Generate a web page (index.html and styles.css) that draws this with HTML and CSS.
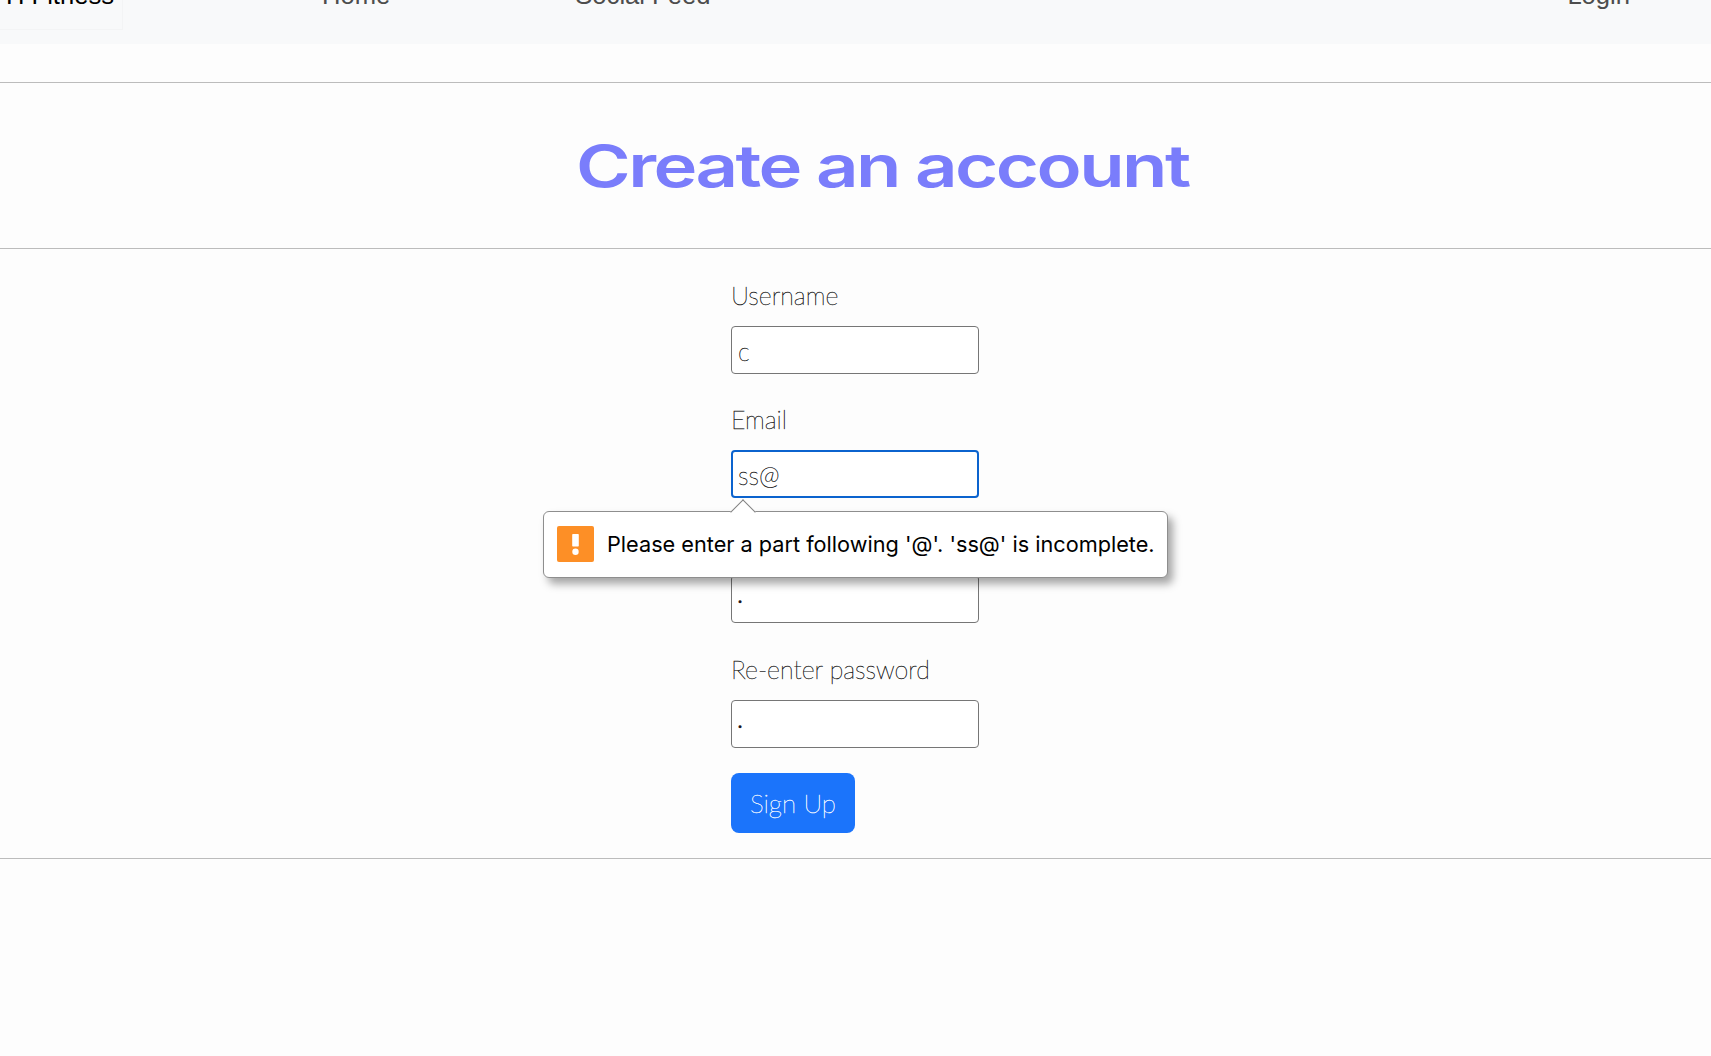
FILE: index.html
```html
<!DOCTYPE html>
<html lang="en">
<head>
  <meta charset="UTF-8" />
  <meta name="viewport" content="width=device-width, initial-scale=1.0"/>
  <title>Create an account</title>
  <link rel="stylesheet" href="styles.css">
</head>
<body>

  <nav class="navbar">
    <a class="brand" href="#">H Fitness</a>
    <a class="nav-link nav-home" href="#">Home</a>
    <a class="nav-link nav-feed" href="#">Social Feed</a>
    <a class="nav-link nav-login" href="#">Login</a>
  </nav>

  <hr class="rule rule-top">
  <h1 class="title"><span>Create an account</span></h1>
  <hr class="rule">

  <form class="signup">
    <div class="field field-first">
      <label for="username">Username</label>
      <input id="username" type="text" value="c">
    </div>
    <div class="field field-email">
      <label for="email">Email</label>
      <input id="email" class="is-focused" type="text" value="ss@">
      <div class="bubble">
        <span class="bubble-icon">
          <svg width="37" height="36" viewBox="0 0 37 36"><rect width="37" height="36" rx="2" fill="#fd8f26"/><rect x="15.2" y="8" width="6.6" height="12.5" rx="0.8" fill="#fff"/><circle cx="18.5" cy="25.8" r="3.2" fill="#fff"/></svg>
        </span>
        <span class="bubble-text">Please enter a part following '@'. 'ss@' is incomplete.</span>
      </div>
    </div>
    <div class="field">
      <label for="password">Password</label>
      <input id="password" class="dots" type="text" value=".">
    </div>
    <div class="field">
      <label for="password2">Re-enter password</label>
      <input id="password2" class="dots" type="text" value=".">
    </div>
    <button class="submit" type="button">Sign Up</button>
  </form>
  <hr class="rule">

</body>
</html>
```

FILE: styles.css
```css
/* ─── Reset & Body ───────────────────────────────────────────────────────── */
* { box-sizing: border-box; margin: 0; padding: 0; }
html, body { height: 100%; overflow: hidden; }
body {
  background: #fdfdfd;
  font-family: "Lato", sans-serif;
  font-weight: 100;
}

/* ─── Navbar (page is scrolled, so its top is cut off) ───────────────────── */
.navbar {
  display: flex;
  align-items: flex-start;
  height: 44px;
  background: #f8f9fa;
  overflow: hidden;
  font-family: "Liberation Sans", sans-serif;
  font-weight: 400;
  font-size: 25.6px;
  line-height: 30px;
}
.navbar a { text-decoration: none; margin-top: -20px; }
.brand {
  width: 123px;
  height: 50px;
  flex: none;
  color: #000;
  text-align: right;
  padding-right: 8px;
  border-right: 1px solid #f3f4f5;
  border-bottom: 1px solid #f3f4f5;
}
.nav-link { color: #4d4d4d; }
.nav-home { margin-left: 199px; }
.nav-feed { margin-left: 185px; }
.nav-login { margin-left: auto; margin-right: 81px; }

/* ─── Heading ────────────────────────────────────────────────────────────── */
.rule { border: 0; border-top: 1px solid #bcbcbc; }
.rule-top { margin-top: 38px; }
.title {
  height: 165px;
  padding-top: 48px;
  padding-left: 53px;
  text-align: center;
  color: #7a7dfb;
  font-family: "Inter", sans-serif;
  font-weight: 580;
  font-size: 58px;
  line-height: 70px;
  letter-spacing: -2px;
}
.title span { display: inline-block; transform: scaleX(1.28); }

/* ─── Form ───────────────────────────────────────────────────────────────── */
.signup {
  width: 248px;
  margin-left: 731px;
  padding-top: 25px;
  padding-bottom: 25px;
}
.field { position: relative; margin-bottom: 25px; }
.field-first { margin-bottom: 24px; }
.field-email { z-index: 1; }
.field label {
  display: block;
  height: 52px;
  padding-top: 5px;
  color: #111;
  font-size: 25px;
  line-height: 32px;
  -webkit-text-stroke: 0.4px #222;
}
.field input {
  display: block;
  width: 248px;
  height: 48px;
  padding: 2px 6px 0;
  background: #fff;
  border: 1px solid #767676;
  border-radius: 4px;
  color: #111;
  font-family: "Lato", sans-serif;
  font-weight: 100;
  font-size: 25px;
  outline: none;
  -webkit-text-stroke: 0.4px #222;
}
.field input.is-focused { border: 2px solid #0b63ce; padding-left: 5px; }
.field input.dots { padding-bottom: 8px; padding-left: 6px; font-size: 17px; font-weight: 700; }

.submit {
  display: block;
  width: 124px;
  height: 60px;
  background: #1b74fb;
  border: 0;
  border-radius: 8px;
  color: #fff;
  font-family: "Lato", sans-serif;
  font-weight: 100;
  font-size: 26px;
  -webkit-text-stroke: 0.35px #fff;
}

/* ─── Validation bubble ──────────────────────────────────────────────────── */
.bubble {
  position: absolute;
  top: 113px;
  left: -188px;
  width: 625px;
  height: 67px;
  display: flex;
  align-items: center;
  gap: 13px;
  padding-left: 13px;
  padding-bottom: 2px;
  background: #fff;
  border: 1px solid #8e8e8e;
  border-radius: 6px;
  box-shadow: 5px 6px 8px rgba(0,0,0,0.35);
  color: #000;
  font-family: "Inter", sans-serif;
  font-weight: 400;
  font-size: 21.7px;
  white-space: nowrap;
}
.bubble::before {
  content: "";
  position: absolute;
  top: -9px;
  left: 190px;
  width: 17px;
  height: 17px;
  background: #fff;
  border-top: 1px solid #808080;
  border-left: 1px solid #808080;
  transform: rotate(45deg);
}
.bubble-icon { display: flex; flex: none; }
```
